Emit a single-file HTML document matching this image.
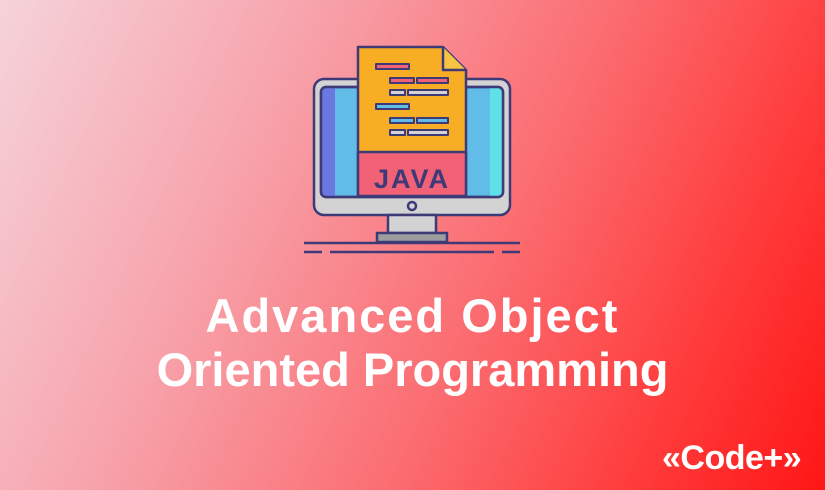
<!DOCTYPE html>
<html><head><style>
html,body{margin:0;padding:0}
body{width:825px;height:490px;overflow:hidden;position:relative;
background:linear-gradient(115deg,#f6d3da 0%,#f7a3ac 30%,#fb6a6e 60%,#ff3a3a 82%,#ff1616 100%);
font-family:"Liberation Sans",sans-serif;}
.t{position:absolute;left:0;width:825px;text-align:center;color:#fff;font-weight:bold;font-size:47px}
.logo{position:absolute;left:662px;top:439px;color:#fff;font-weight:bold;font-size:34px;letter-spacing:-0.5px}
</style></head><body>
<svg width="825" height="490" style="position:absolute;left:0;top:0">
<g stroke="#3e3a78" stroke-width="2.5" stroke-linejoin="round">
<rect x="314" y="79" width="196" height="136" rx="10" fill="#d3d3d3"/>
<rect x="321" y="87" width="182" height="110" rx="5" fill="#62bce8"/>
<rect x="322" y="88" width="13" height="108" fill="#6a78e0" stroke="none"/>
<rect x="490" y="88" width="12" height="108" fill="#5fe0e6" stroke="none"/>
<rect x="321" y="87" width="182" height="110" rx="5" fill="none"/>
<circle cx="412" cy="206" r="4" fill="#d3d3d3"/>
<rect x="388" y="215" width="48" height="18" fill="#d3d3d3"/>
<rect x="377" y="233" width="70" height="9" fill="#9d9d9d"/>
<path d="M358 47 H443 L466 70 V196 H358 Z" fill="#f7ae25"/>
<path d="M443 47 V70 H466" fill="#f7c342"/>
<rect x="358" y="152" width="108" height="44" fill="#f16277"/>
<g stroke-width="2">
<rect x="376" y="64" width="33" height="5" fill="#f16277"/>
<rect x="390" y="78" width="24" height="5" fill="#f16277"/>
<rect x="417" y="78" width="31" height="5" fill="#f16277"/>
<rect x="390" y="90" width="15" height="5" fill="#d3d3d3"/>
<rect x="408" y="90" width="40" height="5" fill="#d3d3d3"/>
<rect x="376" y="104" width="33" height="5" fill="#62bce8"/>
<rect x="390" y="118" width="24" height="5" fill="#62bce8"/>
<rect x="417" y="118" width="31" height="5" fill="#62bce8"/>
<rect x="390" y="130" width="15" height="5" fill="#d3d3d3"/>
<rect x="408" y="130" width="40" height="5" fill="#d3d3d3"/>
</g>
<line x1="304" y1="243" x2="520" y2="243"/>
<line x1="304" y1="252" x2="322" y2="252"/>
<line x1="330" y1="252" x2="494" y2="252"/>
<line x1="502" y1="252" x2="520" y2="252"/>
</g>
<text x="412" y="188" text-anchor="middle" font-family="Liberation Sans" font-weight="bold" font-size="27" fill="#3e3a78" letter-spacing="2">JAVA</text>
</svg>
<div class="t" style="top:288px;letter-spacing:2px">Advanced Object</div>
<div class="t" style="top:342px">Oriented Programming</div>
<div class="logo">«Code+»</div>
</body></html>
